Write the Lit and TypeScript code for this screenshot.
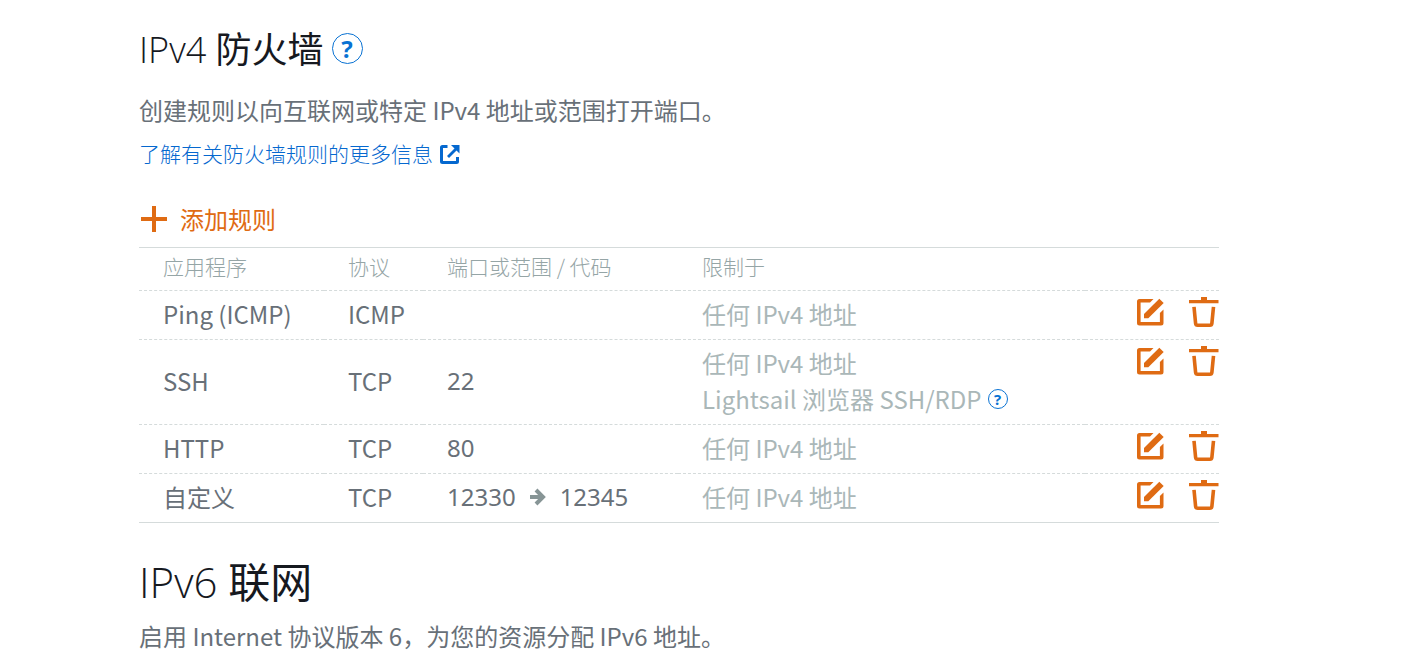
import { LitElement, html, css, svg, nothing } from "lit";
import { customElement, property } from "lit/decorators.js";

interface Rule {
  app: string;
  protocol: string;
  from: string;
  to?: string;
  browserAccess?: boolean;
}

const RULES: Rule[] = [
  { app: "Ping (ICMP)", protocol: "ICMP", from: "" },
  { app: "SSH", protocol: "TCP", from: "22", browserAccess: true },
  { app: "HTTP", protocol: "TCP", from: "80" },
  { app: "自定义", protocol: "TCP", from: "12330", to: "12345" },
];

const ICONS = {
  external: {
    box: "0 0 20 20",
    shape: svg`<path d="M7.500 2.500H2.500q-1 0-1 1v14q0 1 1 1h14q1 0 1-1V13" fill="none" stroke="currentColor" stroke-width="3"/><path d="M8 13L16.500 4.500" fill="none" stroke="currentColor" stroke-width="2.800"/><path d="M11 1h8.500V9.500z"/>`,
  },
  plus: {
    box: "0 0 26 26",
    shape: svg`<path d="M11 0h4v11h11v4H15v11h-4V15H0v-4h11z"/>`,
  },
  edit: {
    box: "0 0 27 27",
    shape: svg`<path d="M16.500 0L13 3.600H3.600V22.900H22.900V14l3.600-3.500V24a2.500 2.500 0 0 1-2.500 2.500H2.500A2.500 2.500 0 0 1 0 24V2.500A2.500 2.500 0 0 1 2.500 0z"/><path d="M22.300 -.200L26.700 4 11.300 19.300H7V15z"/>`,
  },
  trash: {
    box: "0 0 30 30",
    shape: svg`<path d="M12 0h6v3h11.500v3.200H0V3h12z"/><path d="M5 9.800l1.600 16.500q.200 1.900 2 1.900h12.300q1.800 0 2-1.900L24.500 9.800" fill="none" stroke="currentColor" stroke-width="3.600"/>`,
  },
  arrow: {
    box: "0 0 16 18",
    shape: svg`<path d="M0 9h13M6 2l7 7-7 7" fill="none" stroke="currentColor" stroke-width="4"/>`,
  },
};

@customElement("ls-icon")
class LsIcon extends LitElement {
  @property() name: keyof typeof ICONS = "plus";

  static styles = css`
    :host { display: block; }
    svg { display: block; width: 100%; height: 100%; fill: currentColor; overflow: visible; }
  `;

  render() {
    const icon = ICONS[this.name];
    return html`<svg viewBox=${icon.box} aria-hidden="true">${icon.shape}</svg>`;
  }
}

@customElement("app-root")
class AppRoot extends LitElement {
  static styles = css`
    :host {
      display: block;
      padding: 25px 207px 0 139px;
      background: #fff;
      color: #687078;
      font-family: "Noto Sans CJK SC", sans-serif;
      font-size: 24px;
      line-height: 36px;
    }
    h1, h2, p { margin: 0; font-weight: 400; }
    h1, h2 { color: #16191f; }
    .light { font-family: "Open Sans", "Noto Sans CJK SC", sans-serif; font-weight: 300; }
    .heading { display: flex; align-items: center; gap: 8px; }
    h2 { font-size: 36px; line-height: 44px; }
    h1 { font-size: 42px; line-height: 52px; margin-top: 31px; }
    .intro { margin-top: 20px; }
    .summary { margin-top: 10px; }
    .more {
      display: flex;
      width: fit-content;
      align-items: center;
      gap: 7px;
      margin-top: 9px;
      font-size: 21px;
      line-height: 32px;
      font-weight: 300;
      color: #0568cf;
      text-decoration: none;
    }
    .more ls-icon { width: 20px; height: 20px; padding-top: 2px; }
    button { border: 0; padding: 0; background: none; font: inherit; cursor: pointer; }
    .help {
      box-sizing: border-box;
      width: 31px;
      height: 31px;
      border: 1px solid;
      border-radius: 50%;
      color: #0972d3;
      font-family: "Noto Sans", sans-serif;
      font-size: 24px;
      line-height: 28px;
      font-weight: 700;
    }
    .help.small { width: 20px; height: 20px; font-size: 15px; line-height: 18px; }
    .add { display: flex; align-items: center; gap: 13px; margin-top: 32px; padding-left: 2px; color: #df6b13; }
    .add ls-icon { width: 26px; height: 26px; }
    table { width: 100%; margin-top: 10px; table-layout: fixed; border-collapse: separate; border-spacing: 0; }
    th, td { padding: 5px 0 7px 24px; border-bottom: 1px dashed #d5dbdb; text-align: left; font-weight: 400; }
    th { padding: 2px 0 8px 24px; border-top: 1px solid #d5dbdb; font-size: 21px; line-height: 32px; font-weight: 300; color: #95a5a6; }
    tbody tr:last-child td { border-bottom-style: solid; }
    .c-app { width: 185px; }
    .c-protocol { width: 99px; }
    .c-port { width: 255px; }
    .c-tools { width: 134px; }
    .muted { color: #aab7b8; }
    .port { font-family: "Noto Sans", sans-serif; }
    .line, .range { display: flex; align-items: center; }
    .line { gap: 6px; }
    .range { gap: 14px; }
    .range ls-icon { width: 16px; height: 18px; color: #879596; }
    td.tools { padding: 6px 0 0; vertical-align: top; }
    .actions { display: flex; justify-content: flex-end; gap: 25px; align-items: center; color: #df6b13; }
    .actions button { color: inherit; }
    .edit ls-icon { width: 27px; height: 27px; }
    .trash ls-icon { width: 30px; height: 30px; }
  `;

  private row(rule: Rule) {
    return html`<tr>
      <td>${rule.app}</td>
      <td>${rule.protocol}</td>
      <td class="port">${rule.to
        ? html`<div class="range"><span>${rule.from}</span><ls-icon name="arrow"></ls-icon><span>${rule.to}</span></div>`
        : rule.from}</td>
      <td class="muted">
        <div class="line">任何 IPv4 地址</div>
        ${rule.browserAccess
          ? html`<div class="line"><span>Lightsail 浏览器 SSH/RDP</span><button class="help small">?</button></div>`
          : nothing}
      </td>
      <td class="tools">
        <div class="actions">
          <button class="edit" aria-label="编辑"><ls-icon name="edit"></ls-icon></button>
          <button class="trash" aria-label="删除"><ls-icon name="trash"></ls-icon></button>
        </div>
      </td>
    </tr>`;
  }

  render() {
    return html`
      <section>
        <div class="heading">
          <h2><span class="light">IPv4 </span>防火墙</h2>
          <button class="help">?</button>
        </div>
        <p class="intro">创建规则以向互联网或特定 IPv4 地址或范围打开端口。</p>
        <a class="more" href="#">了解有关防火墙规则的更多信息<ls-icon name="external"></ls-icon></a>
        <button class="add"><ls-icon name="plus"></ls-icon>添加规则</button>
        <table>
          <colgroup>
            <col class="c-app" /><col class="c-protocol" /><col class="c-port" /><col /><col class="c-tools" />
          </colgroup>
          <thead>
            <tr>
              <th scope="col">应用程序</th>
              <th scope="col">协议</th>
              <th scope="col">端口或范围 / 代码</th>
              <th scope="col">限制于</th>
              <th scope="col" aria-label="操作"></th>
            </tr>
          </thead>
          <tbody>${RULES.map((rule) => this.row(rule))}</tbody>
        </table>
      </section>
      <section>
        <h1><span class="light">IPv6 </span>联网</h1>
        <p class="summary">启用 Internet 协议版本 6，为您的资源分配 IPv6 地址。</p>
      </section>
    `;
  }
}
